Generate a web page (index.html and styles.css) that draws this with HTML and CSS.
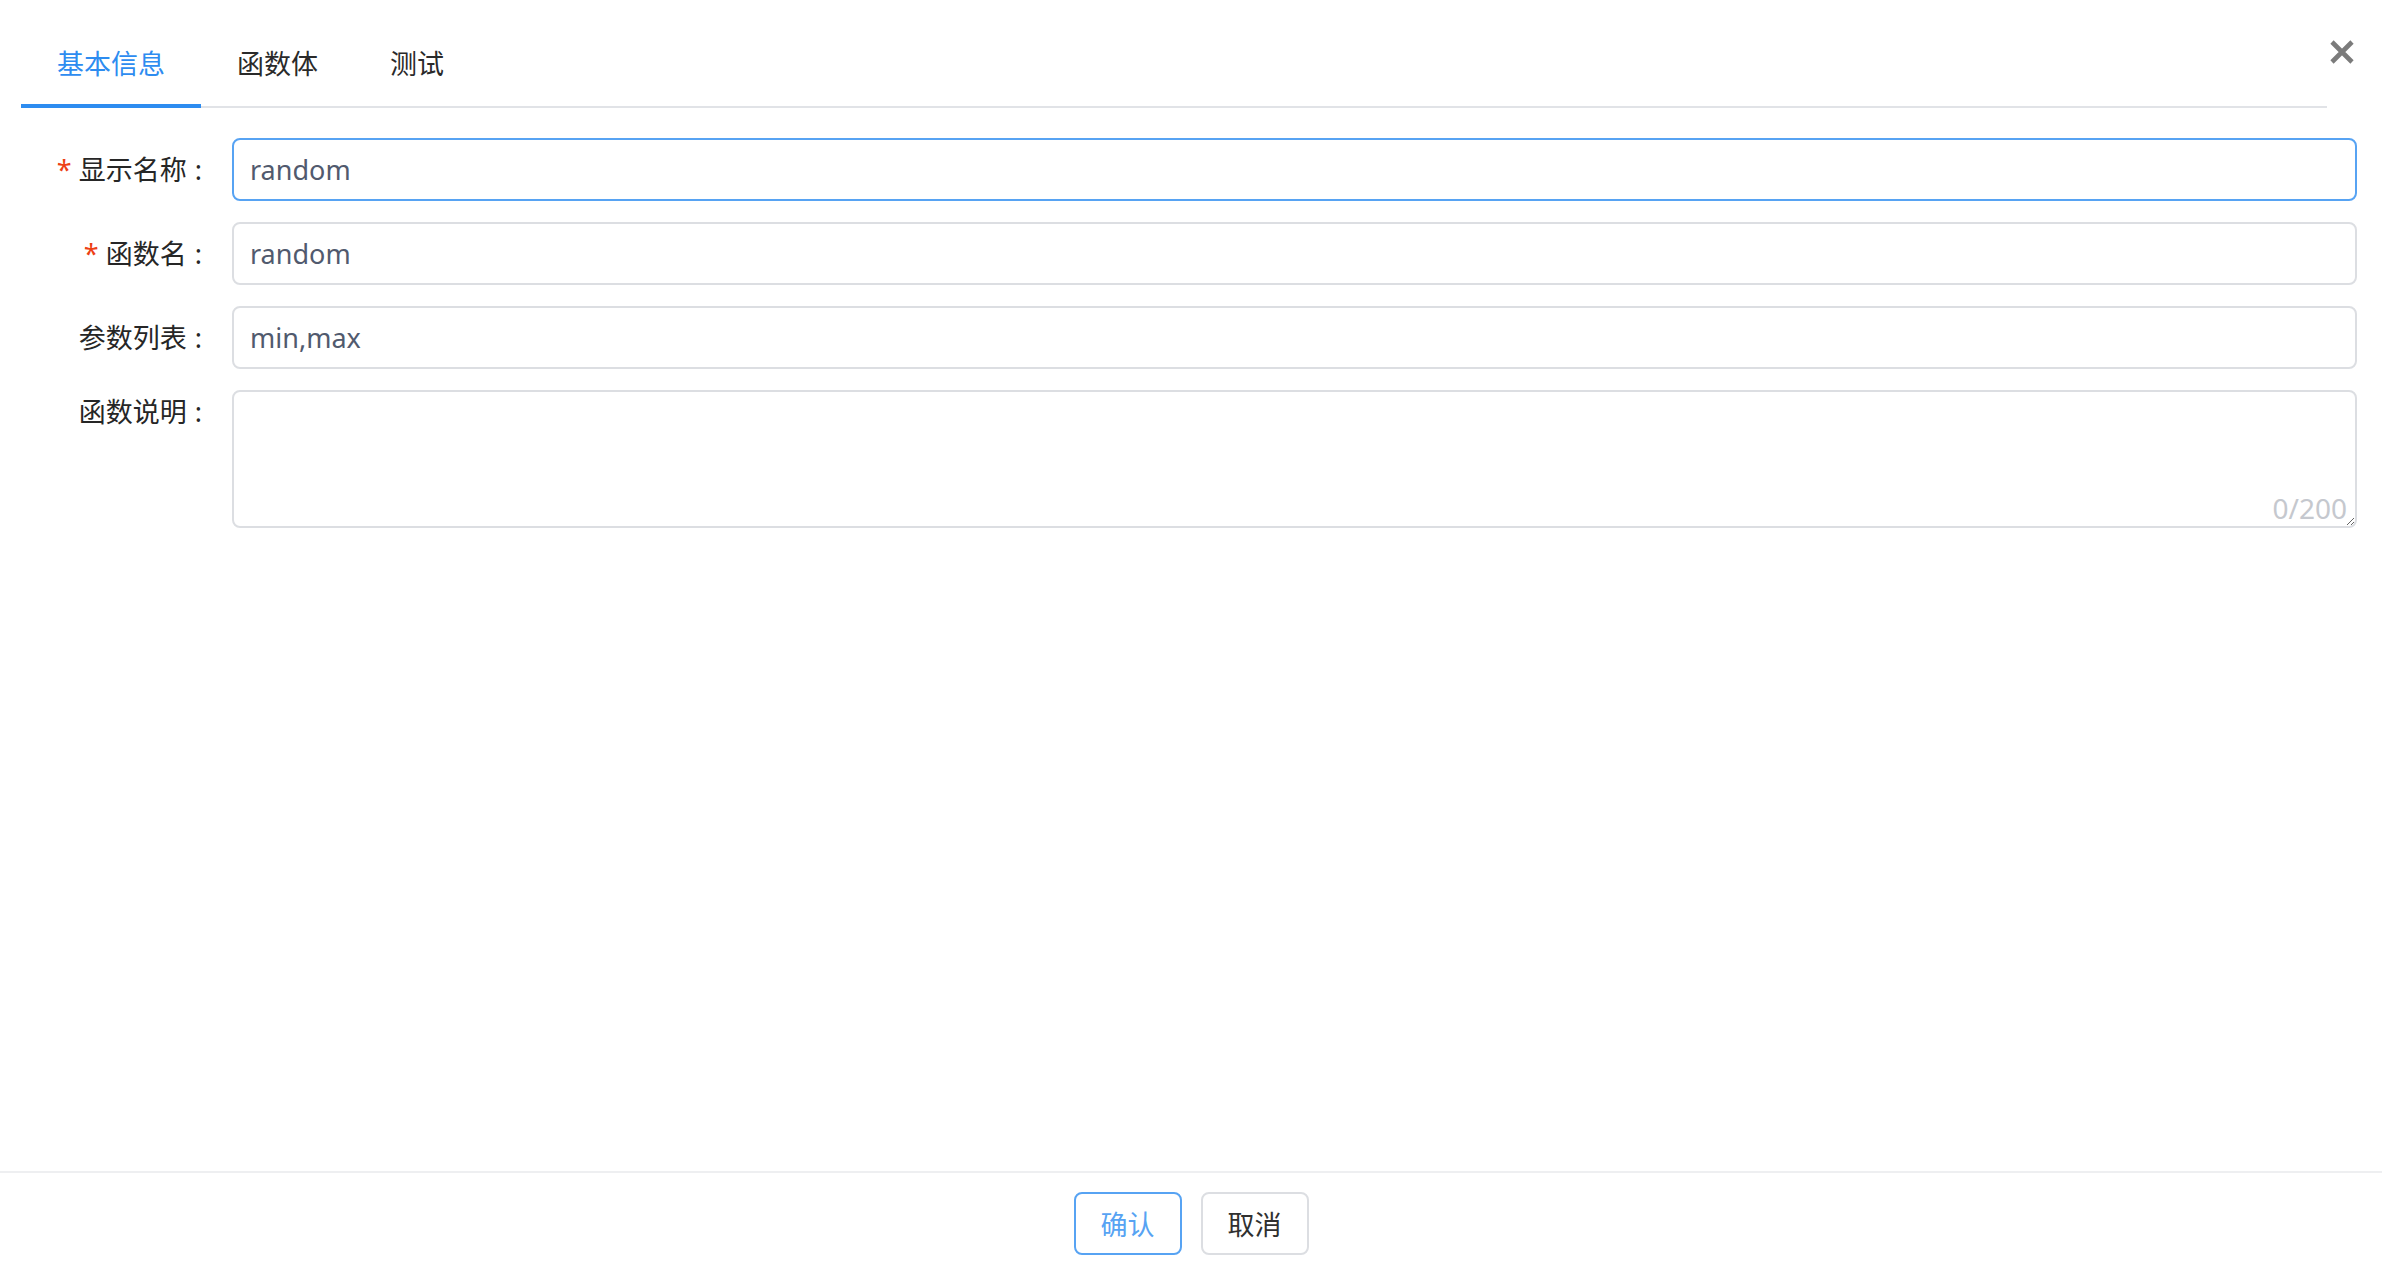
FILE: index.html
```html
<html lang="zh-CN">
<head>
  <meta charset="UTF-8">
  <title>函数编辑</title>
  <link rel="stylesheet" href="styles.css">
</head>
<body>

  <div class="modal">
    <a class="close-btn" href="#" title="关闭">
      <svg width="26" height="26" viewBox="0 0 26 26">
        <path d="M3 3 L23 23 M23 3 L3 23" stroke="#7b7b7b" stroke-width="4.6" stroke-linecap="butt" fill="none"/>
      </svg>
    </a>

    <div class="modal-body">
      <div class="tabs">
        <div class="tab active">基本信息</div>
        <div class="tab">函数体</div>
        <div class="tab">测试</div>
      </div>

      <div class="form">
        <div class="form-row">
          <label class="form-label"><span class="required">*</span>显示名称</label>
          <div class="form-field">
            <input type="text" class="input focused" value="random">
          </div>
        </div>

        <div class="form-row">
          <label class="form-label"><span class="required">*</span>函数名</label>
          <div class="form-field">
            <input type="text" class="input" value="random">
          </div>
        </div>

        <div class="form-row">
          <label class="form-label">参数列表</label>
          <div class="form-field">
            <input type="text" class="input" value="min,max">
          </div>
        </div>

        <div class="form-row top">
          <label class="form-label">函数说明</label>
          <div class="form-field textarea-wrap">
            <textarea class="textarea" maxlength="200"></textarea>
            <span class="word-count">0/200</span>
          </div>
        </div>
      </div>
    </div>

    <div class="modal-footer">
      <button class="btn btn-primary">确认</button>
      <button class="btn">取消</button>
    </div>
  </div>

</body>
</html>
```

FILE: styles.css
```css
body {
  margin: 0;
  font-family: "Noto Sans", "Noto Sans CJK SC", sans-serif;
  font-size: 27px;
  color: #333;
  background: #fff;
}
.modal {
  position: relative;
  height: 100vh;
  display: flex;
  flex-direction: column;
}
.modal-body {
  flex: 1;
}
.close-btn {
  position: absolute;
  top: 39px;
  right: 27px;
  line-height: 0;
}

/* tabs */
.tabs {
  display: flex;
  margin: 0 55px 0 21px;
  border-bottom: 2px solid #e1e3e7;
}
.tab {
  position: relative;
  padding: 44px 36px 22px;
  line-height: 40px;
  color: #2a2a2a;
  cursor: pointer;
}
.tab.active {
  color: #2d8cf0;
}
.tab.active::after {
  content: "";
  position: absolute;
  left: 0;
  right: 0;
  bottom: -2px;
  height: 4px;
  background: #2d8cf0;
}

/* form */
.form {
  margin-top: 30px;
  padding-right: 25px;
}
.form-row {
  display: flex;
  align-items: center;
  margin-bottom: 21px;
}
.form-row.top {
  align-items: flex-start;
}
.form-label {
  width: 232px;
  flex-shrink: 0;
  box-sizing: border-box;
  padding-right: 30px;
  text-align: right;
  line-height: 44px;
  color: #262626;
}
.form-label::after {
  content: ":";
  margin-left: 8px;
}
.required {
  color: #ed4014;
  margin-right: 7px;
}
.form-field {
  flex: 1;
}
.input {
  display: block;
  width: 100%;
  height: 63px;
  box-sizing: border-box;
  padding: 0 16px;
  border: 2px solid #dcdee2;
  border-radius: 8px;
  font: inherit;
  font-size: 27px;
  color: #515a6e;
  outline: none;
}
.input.focused {
  border-color: #57a3f3;
}
.textarea-wrap {
  position: relative;
}
.textarea {
  display: block;
  width: 100%;
  height: 138px;
  box-sizing: border-box;
  padding: 8px 16px;
  border: 2px solid #dcdee2;
  border-radius: 8px;
  font: inherit;
  color: #515a6e;
  outline: none;
}
.word-count {
  position: absolute;
  right: 10px;
  bottom: 0;
  color: #c5c8ce;
  font-size: 28px;
  line-height: 40px;
}

/* footer */
.modal-footer {
  display: flex;
  justify-content: center;
  gap: 19px;
  border-top: 2px solid #eeeff1;
  padding: 19px 0 13px;
}
.btn {
  width: 108px;
  height: 63px;
  border: 2px solid #dcdee2;
  border-radius: 8px;
  background: #fff;
  font: inherit;
  color: #303030;
  cursor: pointer;
}
.btn-primary {
  border-color: #57a3f3;
  color: #57a3f3;
}
```
